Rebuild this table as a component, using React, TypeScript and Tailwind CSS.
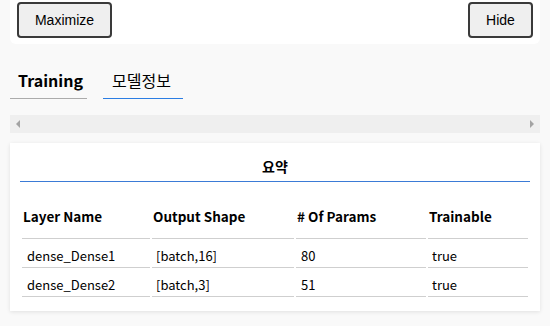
import React from "react";

const FONT = "font-['Noto_Sans_CJK_KR','Noto_Sans',sans-serif]";

type Layer = {
  name: string;
  shape: string;
  params: number;
  trainable: boolean;
};

const layers: Layer[] = [
  { name: "dense_Dense1", shape: "[batch,16]", params: 80, trainable: true },
  { name: "dense_Dense2", shape: "[batch,3]", params: 51, trainable: true },
];

const headers = ["Layer Name", "Output Shape", "# Of Params", "Trainable"];

function WinButton({ label, className = "" }: { label: string; className?: string }) {
  return (
    <button
      className={`h-[36px] rounded-[4px] border-2 border-[#3a3a3a] bg-[#efefef] text-[14px] text-black font-['Liberation_Sans',Arial,sans-serif] ${className}`}
    >
      {label}
    </button>
  );
}

function ScrollArrow({ dir }: { dir: "left" | "right" }) {
  return (
    <svg width="4" height="8" viewBox="0 0 4 8" className="fill-[#a3a3a3]">
      {dir === "left" ? <path d="M4 0 L0 4 L4 8 Z" /> : <path d="M0 0 L4 4 L0 8 Z" />}
    </svg>
  );
}

export default function App() {
  return (
    <div className={`min-h-[326px] w-[550px] bg-[#f9f9f9] px-[10px] ${FONT}`}>
      {/* window controls */}
      <div className="flex h-[44px] items-start justify-between rounded-b-[6px] bg-white pl-[7px] pr-[7px] pt-[2px]">
        <WinButton label="Maximize" className="w-[95px]" />
        <WinButton label="Hide" className="w-[65px]" />
      </div>

      {/* tabs */}
      <div className="mt-[16px] flex gap-[16px]">
        <div className="border-b border-[#ababab] pl-[8px] pr-[8px] pt-[8px] pb-[6px] text-[16px] leading-[24px] font-bold text-black w-[77px]">
          Training
        </div>
        <div className="border-b border-[#2b7de3] pl-[9px] pr-[8px] pt-[8px] pb-[6px] text-[16px] leading-[24px] text-black w-[80px]">
          모델정보
        </div>
      </div>

      {/* horizontal scroll track */}
      <div className="mt-[16px] flex h-[18px] items-center justify-between bg-[#efefef] px-[6px]">
        <ScrollArrow dir="left" />
        <ScrollArrow dir="right" />
      </div>

      {/* summary card */}
      <div className="mt-[10px] bg-white p-[10px] pb-[12px] shadow-[0_1px_4px_rgba(0,0,0,0.10)]">
        <div className="border-b border-[#3b7bd6] h-[29px] pt-[3px] text-center text-[14px] leading-[20px] font-bold text-black">
          요약
        </div>
        <div className="grid grid-cols-[128px_142px_130px_100px] gap-x-[2px] gap-y-[2px] p-[2px] text-[13px] text-black">
          {headers.map((h) => (
            <div
              key={h}
              className="border-b border-[#cfcfcf] px-[1px] pt-[22px] pb-[12px] text-[13.5px] leading-[20px] font-bold"
            >
              {h}
            </div>
          ))}
          {layers.map((l) => (
            <React.Fragment key={l.name}>
              <div className="border-b border-[#cfcfcf] px-[5px] pt-[5px] pb-[1px] leading-[20px]">{l.name}</div>
              <div className="border-b border-[#cfcfcf] px-[4px] pt-[5px] pb-[1px] leading-[20px]">{l.shape}</div>
              <div className="border-b border-[#cfcfcf] px-[5px] pt-[5px] pb-[1px] leading-[20px]">{l.params}</div>
              <div className="border-b border-[#cfcfcf] px-[4px] pt-[5px] pb-[1px] leading-[20px]">
                {String(l.trainable)}
              </div>
            </React.Fragment>
          ))}
        </div>
      </div>
    </div>
  );
}
